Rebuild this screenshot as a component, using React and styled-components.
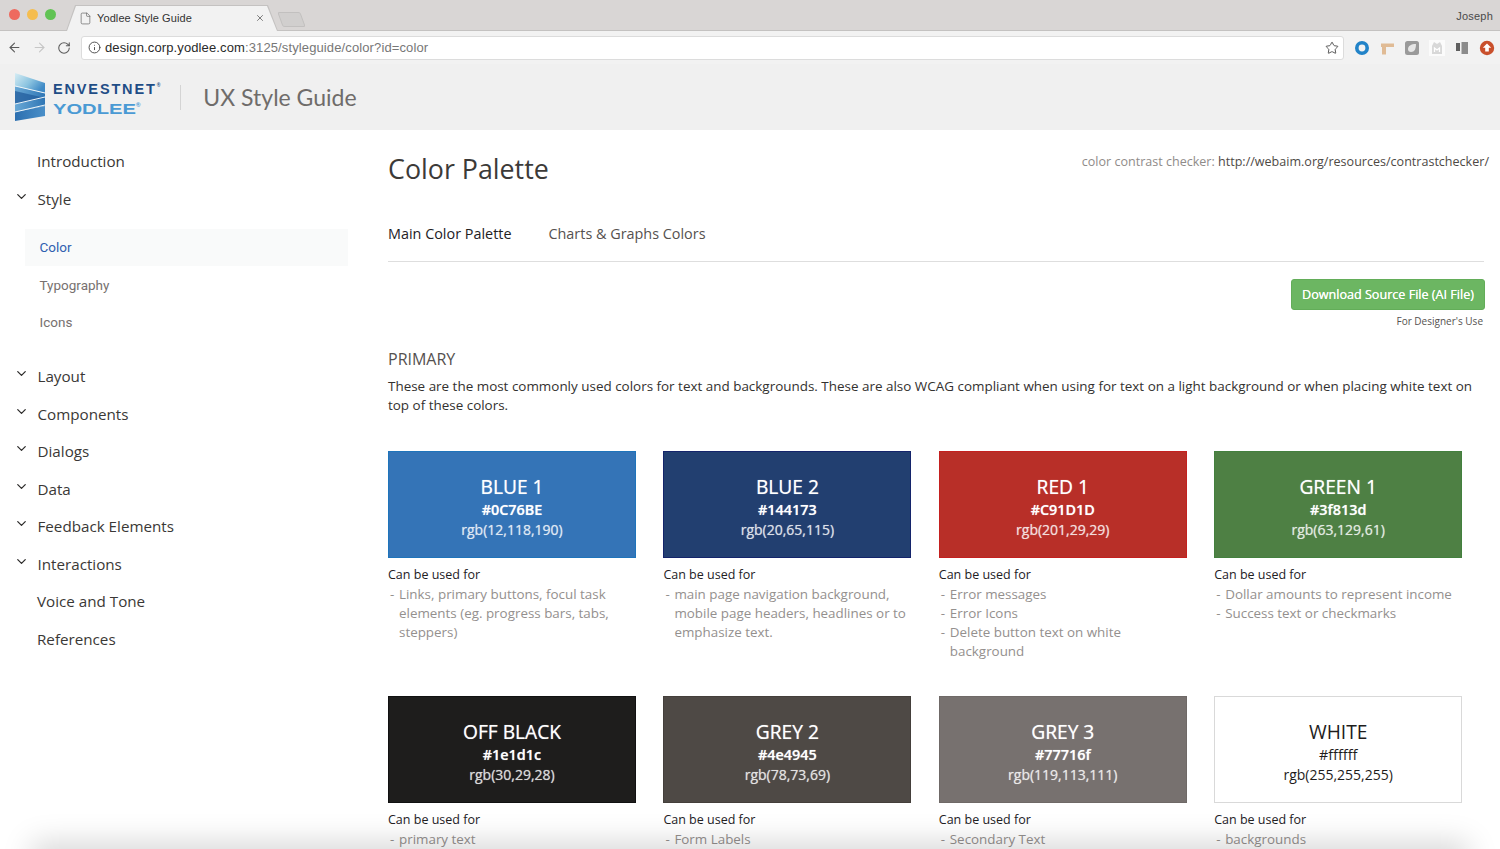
import React from 'react'
import styled, { createGlobalStyle } from 'styled-components'
import { ArrowLeft, ArrowRight, RotateCw, Info, Star, File, X, ChevronDown } from 'lucide-react'

const GlobalStyle = createGlobalStyle`
  html, body { margin: 0; padding: 0; background: #fff; }
  * { box-sizing: border-box; }
`

const Page = styled.div`
  position: relative;
  width: 1500px;
  height: 849px;
  overflow: hidden;
  display: flex;
  flex-direction: column;
  font-family: "Open Sans", sans-serif;
  color: #1e1d1c;
`

/* browser chrome */
const TabBar = styled.div`
  height: 31px;
  flex: none;
  display: flex;
  align-items: flex-end;
  background: #d9d6d5;
  padding-left: 9px;
  border-bottom: 1px solid #c4c2c1;
  font-family: "Liberation Sans", sans-serif;
`
const Lights = styled.div`
  display: flex;
  gap: 7px;
  align-self: flex-start;
  margin-top: 9px;
`
const Light = styled.span`
  width: 11px;
  height: 11px;
  border-radius: 50%;
  background: ${(p) => p.color};
`
const Tab = styled.div`
  position: relative;
  width: 212px;
  height: 26px;
  margin-left: 10px;
  margin-bottom: -1px;
  display: flex;
  align-items: center;
  padding: 0 13px;
  background: #c4c2c1;
  font-size: 11px;
  color: #333;
  clip-path: polygon(0 100%, 9px 0, calc(100% - 10px) 0, 100% 100%);
  &::before {
    content: '';
    position: absolute;
    inset: 1px 1px 0 1px;
    background: #f2f2f2;
    clip-path: polygon(0 100%, 9px 0, calc(100% - 10px) 0, 100% 100%);
  }
  & > * {
    position: relative;
  }
`
const TabTitle = styled.span`
  flex: 1;
  margin-left: 5px;
  letter-spacing: 0.1px;
`
const NewTab = styled.div`
  width: 23px;
  height: 15px;
  margin: 0 0 3px 2px;
  background: #d1cfce;
  border: 1px solid #c2c0bf;
  border-radius: 2px;
  transform: skewX(20deg);
`
const UserName = styled.span`
  margin-left: auto;
  align-self: flex-start;
  margin-top: 10px;
  margin-right: 7px;
  font-size: 11px;
  color: #4a4a4a;
  letter-spacing: 0.2px;
`
const Toolbar = styled.div`
  height: 33px;
  flex: none;
  display: flex;
  align-items: center;
  background: #f2f2f2;
  padding-left: 7px;
  font-family: "Liberation Sans", sans-serif;
`
const NavButton = styled.span`
  display: flex;
  width: 25px;
  color: ${(p) => (p.$off ? '#c6c6c6' : '#5a5a5a')};
`
const Omnibox = styled.div`
  width: 1263px;
  height: 24px;
  margin-left: -1px;
  display: flex;
  align-items: center;
  padding: 0 4px 0 6px;
  background: #fff;
  border: 1px solid #dcdcdc;
  border-radius: 3px;
  font-size: 13px;
  letter-spacing: 0.12px;
`
const Host = styled.span`
  margin-left: 4px;
  color: #2a2a2a;
`
const UrlRest = styled.span`
  flex: 1;
  color: #777;
`
const Extensions = styled.div`
  display: flex;
  align-items: center;
  gap: 9px;
  margin-left: 10px;
`
const ExtIcon = styled.svg`
  display: block;
  width: 16px;
  height: 16px;
`

/* site header */
const SiteHeader = styled.header`
  height: 66px;
  flex: none;
  display: flex;
  align-items: center;
  padding-left: 15px;
  background: #f0f0f0;
`
const Wordmark = styled.div`
  display: flex;
  flex-direction: column;
  margin-left: 8px;
  margin-top: 2px;
`
const Envestnet = styled.span`
  font-family: "Liberation Sans", sans-serif;
  font-weight: 700;
  font-size: 14.5px;
  line-height: 17px;
  letter-spacing: 1.85px;
  color: #1f4d86;
`
const Yodlee = styled.span`
  display: block;
  margin-top: 3px;
  font-family: "Liberation Sans", sans-serif;
  font-weight: 700;
  font-size: 15.5px;
  line-height: 15px;
  color: #4a9ad4;
  transform: scaleX(1.3);
  transform-origin: left;
`
const Mark = styled.sup`
  font-size: 5px;
  letter-spacing: 0;
  line-height: 0;
  vertical-align: 7px;
`
const HeaderRule = styled.span`
  width: 1px;
  height: 25px;
  margin: 0 22px 0 20px;
  background: #d4d4d4;
`
const SiteTitle = styled.span`
  font-family: "Lato", sans-serif;
  font-size: 23px;
  color: #6f6c6a;
`

const Body = styled.div`
  flex: 1;
  display: flex;
  min-height: 0;
`

/* sidebar */
const Sidebar = styled.nav`
  width: 388px;
  flex: none;
  padding: 12.5px 40px 0 0;
`
const NavItem = styled.div`
  height: 37.5px;
  display: flex;
  align-items: center;
  padding-left: ${(p) => (p.$caret ? '37.5px' : '37px')};
  position: relative;
  font-size: 15.2px;
  color: #3a3836;
`
const Caret = styled(ChevronDown)`
  position: absolute;
  left: 14px;
  top: 9px;
  color: #2c2b2a;
`
const SubList = styled.div`
  margin: 11px 0 16.4px 25px;
`
const SubItem = styled.div`
  height: 37.5px;
  display: flex;
  align-items: center;
  padding-left: 14.5px;
  font-family: "Roboto", sans-serif;
  font-size: 13.5px;
  color: ${(p) => (p.$active ? '#2f5fb0' : '#77716f')};
  background: ${(p) => (p.$active ? '#f9fafa' : 'transparent')};
`

/* main column */
const Main = styled.main`
  flex: 1;
  min-width: 0;
  padding-right: 11px;
`
const TitleRow = styled.div`
  display: flex;
  justify-content: space-between;
  align-items: flex-start;
  height: 86px;
  padding-top: 20px;
`
const PageTitle = styled.h1`
  margin: 0;
  font-weight: 400;
  font-size: 26.8px;
  line-height: 38px;
  color: #3c3a38;
`
const ContrastNote = styled.div`
  font-size: 12.55px;
  line-height: 18px;
  margin-top: 3px;
  color: #8f8b89;
`
const ContrastLink = styled.span`
  color: #4e4945;
`
const Tabs = styled.div`
  display: flex;
  gap: 37px;
  height: 46px;
  margin-right: 5px;
  padding-top: 8px;
  border-bottom: 1px solid #dedede;
  font-size: 14.4px;
  line-height: 20px;
`
const TabLink = styled.span`
  color: ${(p) => (p.$active ? '#23211f' : '#55514f')};
`
const DownloadBlock = styled.div`
  display: flex;
  flex-direction: column;
  align-items: flex-end;
  margin-top: 17px;
  padding-right: 4px;
`
const DownloadButton = styled.div`
  width: 194px;
  height: 31px;
  display: flex;
  align-items: center;
  justify-content: center;
  border-radius: 3px;
  border: 1px solid #63ad59;
  background: #6cb662;
  color: #fff;
  font-size: 12.6px;
  text-shadow: 0 0 0.6px #fff;
`
const DesignerNote = styled.div`
  margin-top: 4px;
  padding-right: 2px;
  font-size: 10px;
  line-height: 14px;
  color: #55514f;
`
const SectionLabel = styled.h2`
  margin: 19px 0 0;
  font-weight: 400;
  font-size: 16px;
  line-height: 24px;
  color: #55514f;
`
const Intro = styled.p`
  margin: 6px 0 0;
  width: 1090px;
  font-size: 13.44px;
  line-height: 19px;
  color: #33312f;
`
const SwatchGrid = styled.div`
  display: grid;
  grid-template-columns: repeat(4, 248px);
  column-gap: 27.4px;
  margin-top: 36px;
`
const Card = styled.div`
  height: 245px;
`
const Swatch = styled.div`
  height: 107px;
  display: flex;
  flex-direction: column;
  align-items: center;
  padding-top: 23px;
  background: ${(p) => p.$bg};
  border: 1px solid ${(p) => p.$edge};
  color: ${(p) => (p.$outlined ? '#1e1d1c' : '#fff')};
  text-shadow: ${(p) => (p.$outlined ? 'none' : '0 0 0.8px rgba(255, 255, 255, 0.7)')};
`
const SwatchName = styled.div`
  font-size: 19.2px;
  line-height: 24px;
`
const SwatchHex = styled.div`
  margin-top: 1px;
  font-size: 14.4px;
  line-height: 20px;
  font-weight: ${(p) => (p.$outlined ? 400 : 600)};
`
const SwatchRgb = styled.div`
  font-size: 14px;
  line-height: 20px;
  opacity: ${(p) => (p.$outlined ? 1 : 0.84)};
`
const UsedFor = styled.div`
  margin-top: 7px;
  font-size: 12.5px;
  line-height: 19px;
  color: #23211f;
`
const UseList = styled.ul`
  list-style: none;
  margin: 1px 0 0;
  padding: 0;
`
const UseItem = styled.li`
  position: relative;
  padding-left: 11px;
  font-size: 13.4px;
  line-height: 19px;
  color: #94908e;
  &::before {
    content: '-';
    position: absolute;
    left: 2px;
  }
`
const WindowShadow = styled.div`
  position: absolute;
  left: 38px;
  right: 38px;
  top: 100%;
  height: 20px;
  box-shadow: 0 0 30px 6px rgba(0, 0, 0, 0.17);
  pointer-events: none;
`

const swatches = [
  { name: 'BLUE 1', hex: '#0C76BE', rgb: 'rgb(12,118,190)', bg: '#3474b7', edge: '#1e74bb', uses: ['Links, primary buttons, focul task elements (eg. progress bars, tabs, steppers)'] },
  { name: 'BLUE 2', hex: '#144173', rgb: 'rgb(20,65,115)', bg: '#223f70', edge: '#14246b', uses: ['main page navigation background, mobile page headers, headlines or to emphasize text.'] },
  { name: 'RED 1', hex: '#C91D1D', rgb: 'rgb(201,29,29)', bg: '#b82f28', edge: '#c4201f', uses: ['Error messages', 'Error Icons', 'Delete button text on white background'] },
  { name: 'GREEN 1', hex: '#3f813d', rgb: 'rgb(63,129,61)', bg: '#4e8044', edge: '#43803e', uses: ['Dollar amounts to represent income', 'Success text or checkmarks'] },
  { name: 'OFF BLACK', hex: '#1e1d1c', rgb: 'rgb(30,29,28)', bg: '#1e1d1c', edge: '#111', uses: ['primary text'] },
  { name: 'GREY 2', hex: '#4e4945', rgb: 'rgb(78,73,69)', bg: '#4e4945', edge: '#443f3b', uses: ['Form Labels'] },
  { name: 'GREY 3', hex: '#77716f', rgb: 'rgb(119,113,111)', bg: '#77716f', edge: '#6f6967', uses: ['Secondary Text'] },
  { name: 'WHITE', hex: '#ffffff', rgb: 'rgb(255,255,255)', bg: '#fff', edge: '#d9d9d9', outlined: true, uses: ['backgrounds'] },
]

const navBefore = [{ label: 'Introduction' }, { label: 'Style', caret: true }]
const navAfter = [
  { label: 'Layout', caret: true },
  { label: 'Components', caret: true },
  { label: 'Dialogs', caret: true },
  { label: 'Data', caret: true },
  { label: 'Feedback Elements', caret: true },
  { label: 'Interactions', caret: true },
  { label: 'Voice and Tone' },
  { label: 'References' },
]

const LogoMark = () => (
  <svg width="30" height="48" viewBox="0 0 30 48">
    <defs>
      <linearGradient id="logoTop" x1="0" y1="0" x2="1" y2="0.6">
        <stop offset="0" stopColor="#d6edf4" />
        <stop offset="0.55" stopColor="#8cc4e0" />
        <stop offset="1" stopColor="#3f8ac6" />
      </linearGradient>
      <linearGradient id="logoMid" x1="0" y1="0" x2="1" y2="0">
        <stop offset="0" stopColor="#6aa9d6" />
        <stop offset="1" stopColor="#2f76b5" />
      </linearGradient>
      <linearGradient id="logoLow" x1="0" y1="0" x2="1" y2="0">
        <stop offset="0" stopColor="#2c6fb0" />
        <stop offset="1" stopColor="#4a8fc8" />
      </linearGradient>
    </defs>
    <polygon points="0,0 30,10 30,20 0,13" fill="url(#logoTop)" />
    <polygon points="0,13 30,20 30,33 0,39" fill="url(#logoMid)" />
    <polygon points="0,39 30,33 30,43 0,48" fill="url(#logoLow)" />
    <path d="M0 18 L30 25 L10 29 L0 31 Z" fill="#225c9c" opacity="0.75" />
    <path d="M0 13 L30 20 M0 31 L30 24 M0 39 L30 32" stroke="#eef6fa" strokeWidth="1" fill="none" />
  </svg>
)

const NavRow = ({ label, caret }) => (
  <NavItem $caret={caret}>
    {caret && <Caret size={15} strokeWidth={2} />}
    {label}
  </NavItem>
)

const ColorCard = ({ swatch }) => (
  <Card>
    <Swatch $bg={swatch.bg} $edge={swatch.edge} $outlined={swatch.outlined}>
      <SwatchName>{swatch.name}</SwatchName>
      <SwatchHex $outlined={swatch.outlined}>{swatch.hex}</SwatchHex>
      <SwatchRgb $outlined={swatch.outlined}>{swatch.rgb}</SwatchRgb>
    </Swatch>
    <UsedFor>Can be used for</UsedFor>
    <UseList>
      {swatch.uses.map((use) => (
        <UseItem key={use}>{use}</UseItem>
      ))}
    </UseList>
  </Card>
)

export default function App() {
  return (
    <Page>
      <GlobalStyle />
      <TabBar>
        <Lights>
          <Light color="#ee6a5f" />
          <Light color="#f5bd4f" />
          <Light color="#61c354" />
        </Lights>
        <Tab>
          <File size={13} strokeWidth={1.3} color="#666" />
          <TabTitle>Yodlee Style Guide</TabTitle>
          <X size={10} strokeWidth={1.8} color="#555" />
        </Tab>
        <NewTab />
        <UserName>Joseph</UserName>
      </TabBar>
      <Toolbar>
        <NavButton><ArrowLeft size={15} strokeWidth={1.7} /></NavButton>
        <NavButton $off><ArrowRight size={15} strokeWidth={1.7} /></NavButton>
        <NavButton><RotateCw size={14} strokeWidth={1.8} /></NavButton>
        <Omnibox>
          <Info size={13} strokeWidth={1.7} color="#444" />
          <Host>design.corp.yodlee.com</Host>
          <UrlRest>:3125/styleguide/color?id=color</UrlRest>
          <Star size={14} strokeWidth={1.5} color="#444" />
        </Omnibox>
        <Extensions>
          <ExtIcon viewBox="0 0 16 16"><circle cx="8" cy="8" r="5.2" fill="none" stroke="#2283c8" strokeWidth="3.6" /></ExtIcon>
          <ExtIcon viewBox="0 0 16 16"><path d="M2 3.500h13v3.500H7v7.500H3V7H2z" fill="#e0bb95" /></ExtIcon>
          <ExtIcon viewBox="0 0 16 16"><rect x="1" y="1" width="14" height="14" rx="2.500" fill="#9a9a9a" /><path d="M4 9c0-3 3-5 8-5 0 5-1.500 8-5 8-2 0-3-1.300-3-3z" fill="#e6e6e6" /></ExtIcon>
          <ExtIcon viewBox="0 0 16 16"><rect x="0" y="0" width="16" height="16" fill="#fbfbfb" /><path d="M3 6l2-4 3 2 3-2 2 4v8H3z" fill="#d8d8d8" /><path d="M5.500 12V8l2.500 2 2.500-2v4" fill="none" stroke="#fff" strokeWidth="1.3" /></ExtIcon>
          <ExtIcon viewBox="0 0 16 16"><rect x="2" y="3" width="4" height="8" fill="#5f5f5f" /><rect x="7.500" y="2" width="6.500" height="12" fill="#8b8b8b" /></ExtIcon>
          <ExtIcon viewBox="0 0 16 16"><circle cx="8" cy="8" r="7.200" fill="#c9502c" /><path d="M8 3.500l4.200 4.200h-2.400v3.800H6.200V7.700H3.800z" fill="#fff" /></ExtIcon>
        </Extensions>
      </Toolbar>
      <SiteHeader>
        <LogoMark />
        <Wordmark>
          <Envestnet>ENVESTNET<Mark>®</Mark></Envestnet>
          <Yodlee>YODLEE<Mark>®</Mark></Yodlee>
        </Wordmark>
        <HeaderRule />
        <SiteTitle>UX Style Guide</SiteTitle>
      </SiteHeader>
      <Body>
        <Sidebar>
          {navBefore.map((item) => <NavRow key={item.label} {...item} />)}
          <SubList>
            <SubItem $active>Color</SubItem>
            <SubItem>Typography</SubItem>
            <SubItem>Icons</SubItem>
          </SubList>
          {navAfter.map((item) => <NavRow key={item.label} {...item} />)}
        </Sidebar>
        <Main>
          <TitleRow>
            <PageTitle>Color Palette</PageTitle>
            <ContrastNote>
              color contrast checker: <ContrastLink>http://webaim.org/resources/contrastchecker/</ContrastLink>
            </ContrastNote>
          </TitleRow>
          <Tabs>
            <TabLink $active>Main Color Palette</TabLink>
            <TabLink>Charts &amp; Graphs Colors</TabLink>
          </Tabs>
          <DownloadBlock>
            <DownloadButton>Download Source File (AI File)</DownloadButton>
            <DesignerNote>For Designer's Use</DesignerNote>
          </DownloadBlock>
          <SectionLabel>PRIMARY</SectionLabel>
          <Intro>
            These are the most commonly used colors for text and backgrounds. These are also WCAG compliant when using for text on a light background or when placing white text on top of these colors.
          </Intro>
          <SwatchGrid>
            {swatches.map((swatch) => <ColorCard key={swatch.name} swatch={swatch} />)}
          </SwatchGrid>
        </Main>
      </Body>
      <WindowShadow />
    </Page>
  )
}
